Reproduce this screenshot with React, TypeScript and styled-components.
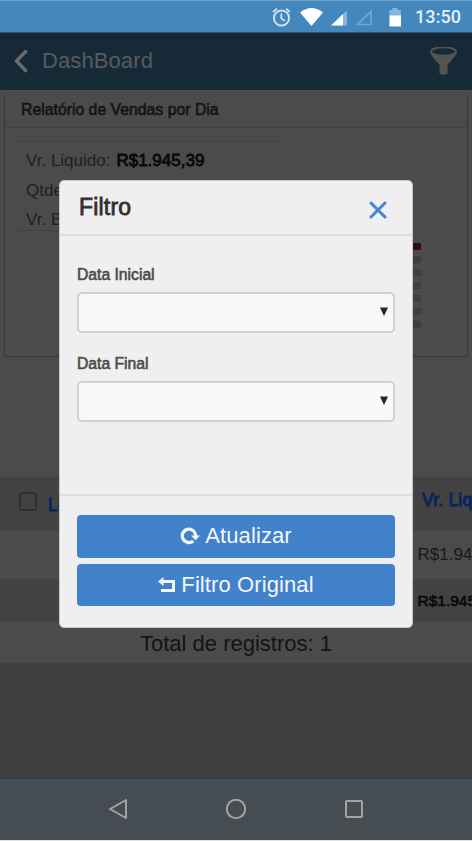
import React from "react";
import styled, { createGlobalStyle } from "styled-components";

const Global = createGlobalStyle`
  * { box-sizing: border-box; }
  body { margin: 0; background: #404040; font-family: "Liberation Sans", Arial, sans-serif; }
`;

const Screen = styled.div`
  position: relative;
  width: 472px;
  height: 841px;
  overflow: hidden;
  display: flex;
  flex-direction: column;
  background: #4b4b4b;
`;

const StatusBar = styled.header`
  flex: none;
  height: 32px;
  display: flex;
  align-items: center;
  justify-content: flex-end;
  padding-right: 11px;
  background: #4387bc;
  border-top: 1px solid #72a5cc;
  color: #e4f0fa;
`;

const Clock = styled.span`
  margin-left: 13px;
  width: 46px;
  font: 500 18px/30px Roboto, sans-serif;
  letter-spacing: 0.1px;
  white-space: nowrap;
`;

const AppBar = styled.div`
  flex: none;
  height: 58px;
  display: flex;
  align-items: center;
  padding: 0 14px;
  background: #152a36;
  border-top: 1px solid #2a5470;
  color: #585b5e;
`;

const AppTitle = styled.h1`
  flex: 1;
  margin: -2px 0 0 14px;
  font-size: 22px;
  font-weight: 400;
  letter-spacing: 0.1px;
`;

const Card = styled.section`
  flex: none;
  height: 262px;
  margin: 5px 4px 0;
  border: 1px solid #383838;
  border-top: 0;
  box-shadow: 0 0 1px #3c3c3c;
`;

const CardTitle = styled.h2`
  height: 33px;
  margin: 0;
  padding-left: 16px;
  border-bottom: 1px solid #414141;
  color: #141414;
  font-size: 15.8px;
  font-weight: 400;
  line-height: 30px;
  -webkit-text-stroke: 0.6px #141414;
`;

const Facts = styled.dl`
  width: 262px;
  height: 90px;
  margin: 13px 0 0 12px;
  padding: 4px 0 0 9px;
  border-top: 1px solid #434343;
  border-bottom: 1px solid #434343;
`;

const Fact = styled.div`
  display: flex;
  gap: 6px;
  height: 29.5px;
  line-height: 29px;
  font-size: 17px;
  color: #202020;
`;

const FactName = styled.dt`
  letter-spacing: 0;
`;

const FactValue = styled.dd`
  margin: 0;
  color: #080808;
  -webkit-text-stroke: 0.8px #080808;
`;

const Legend = styled.div`
  width: 130px;
  margin: 12px 0 0 286px;
`;

const LegendHead = styled.div`
  height: 7px;
  background: #360b0c;
`;

const LegendRow = styled.div`
  display: flex;
  justify-content: space-between;
  margin-top: 6px;
`;

const LegendCell = styled.span<{ $w: number }>`
  width: ${(p) => p.$w}px;
  height: 7px;
  background: #3f3f3f;
`;

const ReportTitle = styled.h2`
  flex: none;
  height: 120px;
  margin: 0;
  padding: 71px 0 0 63px;
  font: 400 25px/40px "DejaVu Serif", serif;
  letter-spacing: -0.4px;
  white-space: nowrap;
  color: #101010;
`;

const Row = styled.div<{ $h: number; $shade?: boolean }>`
  flex: none;
  display: flex;
  align-items: center;
  height: ${(p) => p.$h}px;
  background: ${(p) => (p.$shade ? "#424242" : "#4b4b4b")};
  white-space: nowrap;
  overflow: hidden;
`;

const CheckBox = styled.span`
  flex: none;
  width: 18px;
  height: 19px;
  margin: -4px 11px 0 19px;
  border: 2px solid #303030;
  border-radius: 3px;
  background: #414141;
`;

const ColumnHead = styled.span<{ $w: number; $drop?: number }>`
  flex: none;
  width: ${(p) => p.$w}px;
  margin-top: ${(p) => p.$drop ?? -7}px;
  font-size: 17.5px;
  letter-spacing: 0.2px;
  color: #09245c;
  -webkit-text-stroke: 1px #09245c;
`;

const Amount = styled.span<{ $strong?: boolean }>`
  margin-left: 417.5px;
  font-size: ${(p) => (p.$strong ? 15.5 : 17)}px;
  color: ${(p) => (p.$strong ? "#080808" : "#181818")};
  -webkit-text-stroke: ${(p) => (p.$strong ? 0.6 : 0)}px #080808;
`;

const Total = styled(Row)`
  justify-content: center;
  padding: 3px 0 0;
  font-size: 22px;
  color: #141414;
`;

const Rest = styled.div`
  flex: 1;
  background: #404040;
`;

const NavBar = styled.nav`
  flex: none;
  height: 63px;
  display: flex;
  justify-content: center;
  align-items: center;
  gap: 94px;
  padding-bottom: 2px;
  background: #454c52;
  border-top: 1px solid #34393d;
  border-bottom: 1px solid #dfe1e2;
`;

const Dialog = styled.div`
  position: absolute;
  left: 59px;
  top: 180px;
  width: 354px;
  height: 448px;
  display: flex;
  flex-direction: column;
  background: rgba(246, 246, 246, 0.965);
  border: 1px solid #c8c8c8;
  border-radius: 5px;
`;

const DialogHead = styled.div`
  flex: none;
  height: 55px;
  display: flex;
  justify-content: space-between;
  padding: 0 25px 0 19px;
  border-bottom: 2px solid #dddddd;
`;

const DialogTitle = styled.h2`
  margin: 0;
  font-size: 23px;
  font-weight: 400;
  line-height: 52px;
  letter-spacing: 0.2px;
  color: #303030;
  -webkit-text-stroke: 0.8px #303030;
`;

const CloseButton = styled.button`
  display: flex;
  margin: 20px 0 0;
  padding: 0;
  border: 0;
  background: none;
  height: 18px;
`;

const Fields = styled.div`
  flex: none;
  height: 260px;
  padding: 25px 17px 0;
  border-bottom: 2px solid #dcdddf;
`;

const Field = styled.div`
  height: 88.5px;
`;

const FieldLabel = styled.label`
  display: block;
  height: 31px;
  line-height: 27px;
  font-size: 15.7px;
  letter-spacing: 0;
  color: #4c4c4c;
  -webkit-text-stroke: 0.6px #4c4c4c;
`;

const SelectBox = styled.div`
  height: 41px;
  display: flex;
  align-items: center;
  justify-content: flex-end;
  padding: 0 5px 2px 0;
  border: 2px solid #d0d0d0;
  border-radius: 5px;
  background: #f9f9f9;
`;

const Actions = styled.div`
  display: flex;
  flex-direction: column;
  gap: 6px;
  padding: 19px 17px 0;
`;

const Action = styled.button`
  height: 42.5px;
  display: flex;
  align-items: center;
  justify-content: center;
  gap: 5px;
  padding: 0;
  border: 0;
  border-radius: 4px;
  background: #4282ca;
  color: #f2f7fd;
  font: 22px "Liberation Sans", Arial, sans-serif;
  letter-spacing: 0.1px;
`;

const Arrow = () => (
  <svg width="8" height="9" viewBox="0 0 8 9">
    <path d="M0 .5h8L4 9z" fill="#262626" />
  </svg>
);

const StatusIcons = () => (
  <svg width="130" height="22" viewBox="272 5 130 22" fill="none">
    <circle cx="281.5" cy="17" r="7.6" stroke="#cfe3f3" strokeWidth="2" />
    <path d="M281.3 12.5v5l3.5 2.3M273 11l4-3.4M290 11l-4-3.4" stroke="#cfe3f3" strokeWidth="1.7" />
    <path d="M300 11.5q11.500-9 23 0L311.500 25z" fill="#fff" />
    <path d="M347 9v15.500H332z" fill="#86b3d7" />
    <path d="M343 13v11.500H331z" fill="#fff" />
    <path d="M371 10.500v13H357.500z" stroke="#76a9d0" strokeWidth="1.600" />
    <path d="M389.500 9h3V7h5v2h3.500v6h-11.500z" fill="#8bb6d8" />
    <path d="M389.500 14.500h11.500v11h-11.500z" fill="#fff" />
  </svg>
);

const fields = ["Data Inicial", "Data Final"];
const facts = [
  ["Vr. Liquido:", "R$1.945,39"],
  ["Qtde. Cupons:", "47"],
  ["Vr. Bruto:", "R$2.929,39"],
];

export default function App() {
  return (
    <>
      <Global />
      <Screen>
        <StatusBar>
          <StatusIcons />
          <Clock>13:50</Clock>
        </StatusBar>
        <AppBar>
          <svg width="14" height="24" viewBox="0 0 14 24" fill="none">
            <path d="M12.500 .500L2.500 11l10 10.500" stroke="#6a6b6c" strokeWidth="3.400" />
          </svg>
          <AppTitle>DashBoard</AppTitle>
          <svg width="29" height="30" viewBox="0 1.500 29 30">
            <ellipse cx="14.500" cy="6" rx="12.500" ry="4.200" fill="none" stroke="#555453" strokeWidth="2" />
            <path d="M1.500 7.500Q14.500 14.500 27.500 7.500Q26 12 18.500 19v9q-4 2.500-8 0v-9Q3 12 1.500 7.500z" fill="#555453" />
          </svg>
        </AppBar>
        <Card>
          <CardTitle>Relatório de Vendas por Dia</CardTitle>
          <Facts>
            {facts.map(([name, value]) => (
              <Fact key={name}>
                <FactName>{name}</FactName>
                <FactValue>{value}</FactValue>
              </Fact>
            ))}
          </Facts>
          <Legend>
            <LegendHead />
            {[0, 1, 2, 3, 4, 5].map((i) => (
              <LegendRow key={i}>
                <LegendCell $w={1} />
                <LegendCell $w={1} />
                <LegendCell $w={1} />
                <LegendCell $w={19} />
              </LegendRow>
            ))}
          </Legend>
        </Card>
        <ReportTitle>Relatório de Vendas por Dia</ReportTitle>
        <Row $h={53} $shade>
          <CheckBox />
          <ColumnHead $w={57} $drop={4}>Loja</ColumnHead>
          <ColumnHead $w={83}>DATA</ColumnHead>
          <ColumnHead $w={104}>Vr. Bruto</ColumnHead>
          <ColumnHead $w={130}>Vr. Desconto</ColumnHead>
          <ColumnHead $w={110}>Vr. Liquido</ColumnHead>
        </Row>
        <Row $h={49}>
          <Amount>R$1.945,39</Amount>
        </Row>
        <Row $h={43} $shade>
          <Amount $strong>R$1.945,39</Amount>
        </Row>
        <Total $h={41}>Total de registros: 1</Total>
        <Rest />
        <NavBar>
          <svg width="24" height="24" viewBox="0 0 24 24" fill="none" stroke="#a0a4a7" strokeWidth="2">
            <path d="M20 3v18L4 12z" strokeLinejoin="round" />
          </svg>
          <svg width="24" height="24" viewBox="0 0 24 24" fill="none" stroke="#a0a4a7" strokeWidth="2">
            <circle cx="12" cy="12" r="9.200" />
          </svg>
          <svg width="24" height="24" viewBox="0 0 24 24" fill="none" stroke="#a0a4a7" strokeWidth="2">
            <rect x="4" y="4" width="16" height="16" rx="1" />
          </svg>
        </NavBar>
        <Dialog role="dialog">
          <DialogHead>
            <DialogTitle>Filtro</DialogTitle>
            <CloseButton aria-label="Fechar">
              <svg width="18" height="18" viewBox="0 0 18 18">
                <path d="M2 2l14 14M16 2L2 16" stroke="#4486cf" strokeWidth="3" strokeLinecap="round" />
              </svg>
            </CloseButton>
          </DialogHead>
          <Fields>
            {fields.map((label) => (
              <Field key={label}>
                <FieldLabel>{label}</FieldLabel>
                <SelectBox>
                  <Arrow />
                </SelectBox>
              </Field>
            ))}
          </Fields>
          <Actions>
            <Action>
              <svg width="20" height="18" viewBox="0 0 20 18" fill="none">
                <path d="M13.300 14A6.700 6.700 0 1 1 15.700 9" stroke="currentColor" strokeWidth="3.200" />
                <path d="M11 8.500h9l-4.500 4.800z" fill="currentColor" />
              </svg>
              Atualizar
            </Action>
            <Action>
              <svg width="18" height="16" viewBox="0 0 18 16" fill="none">
                <path d="M4 4.500h11.500v9H3" stroke="currentColor" strokeWidth="3" />
                <path d="M0 4.500L5.500 0v9z" fill="currentColor" />
              </svg>
              Filtro Original
            </Action>
          </Actions>
        </Dialog>
      </Screen>
    </>
  );
}
